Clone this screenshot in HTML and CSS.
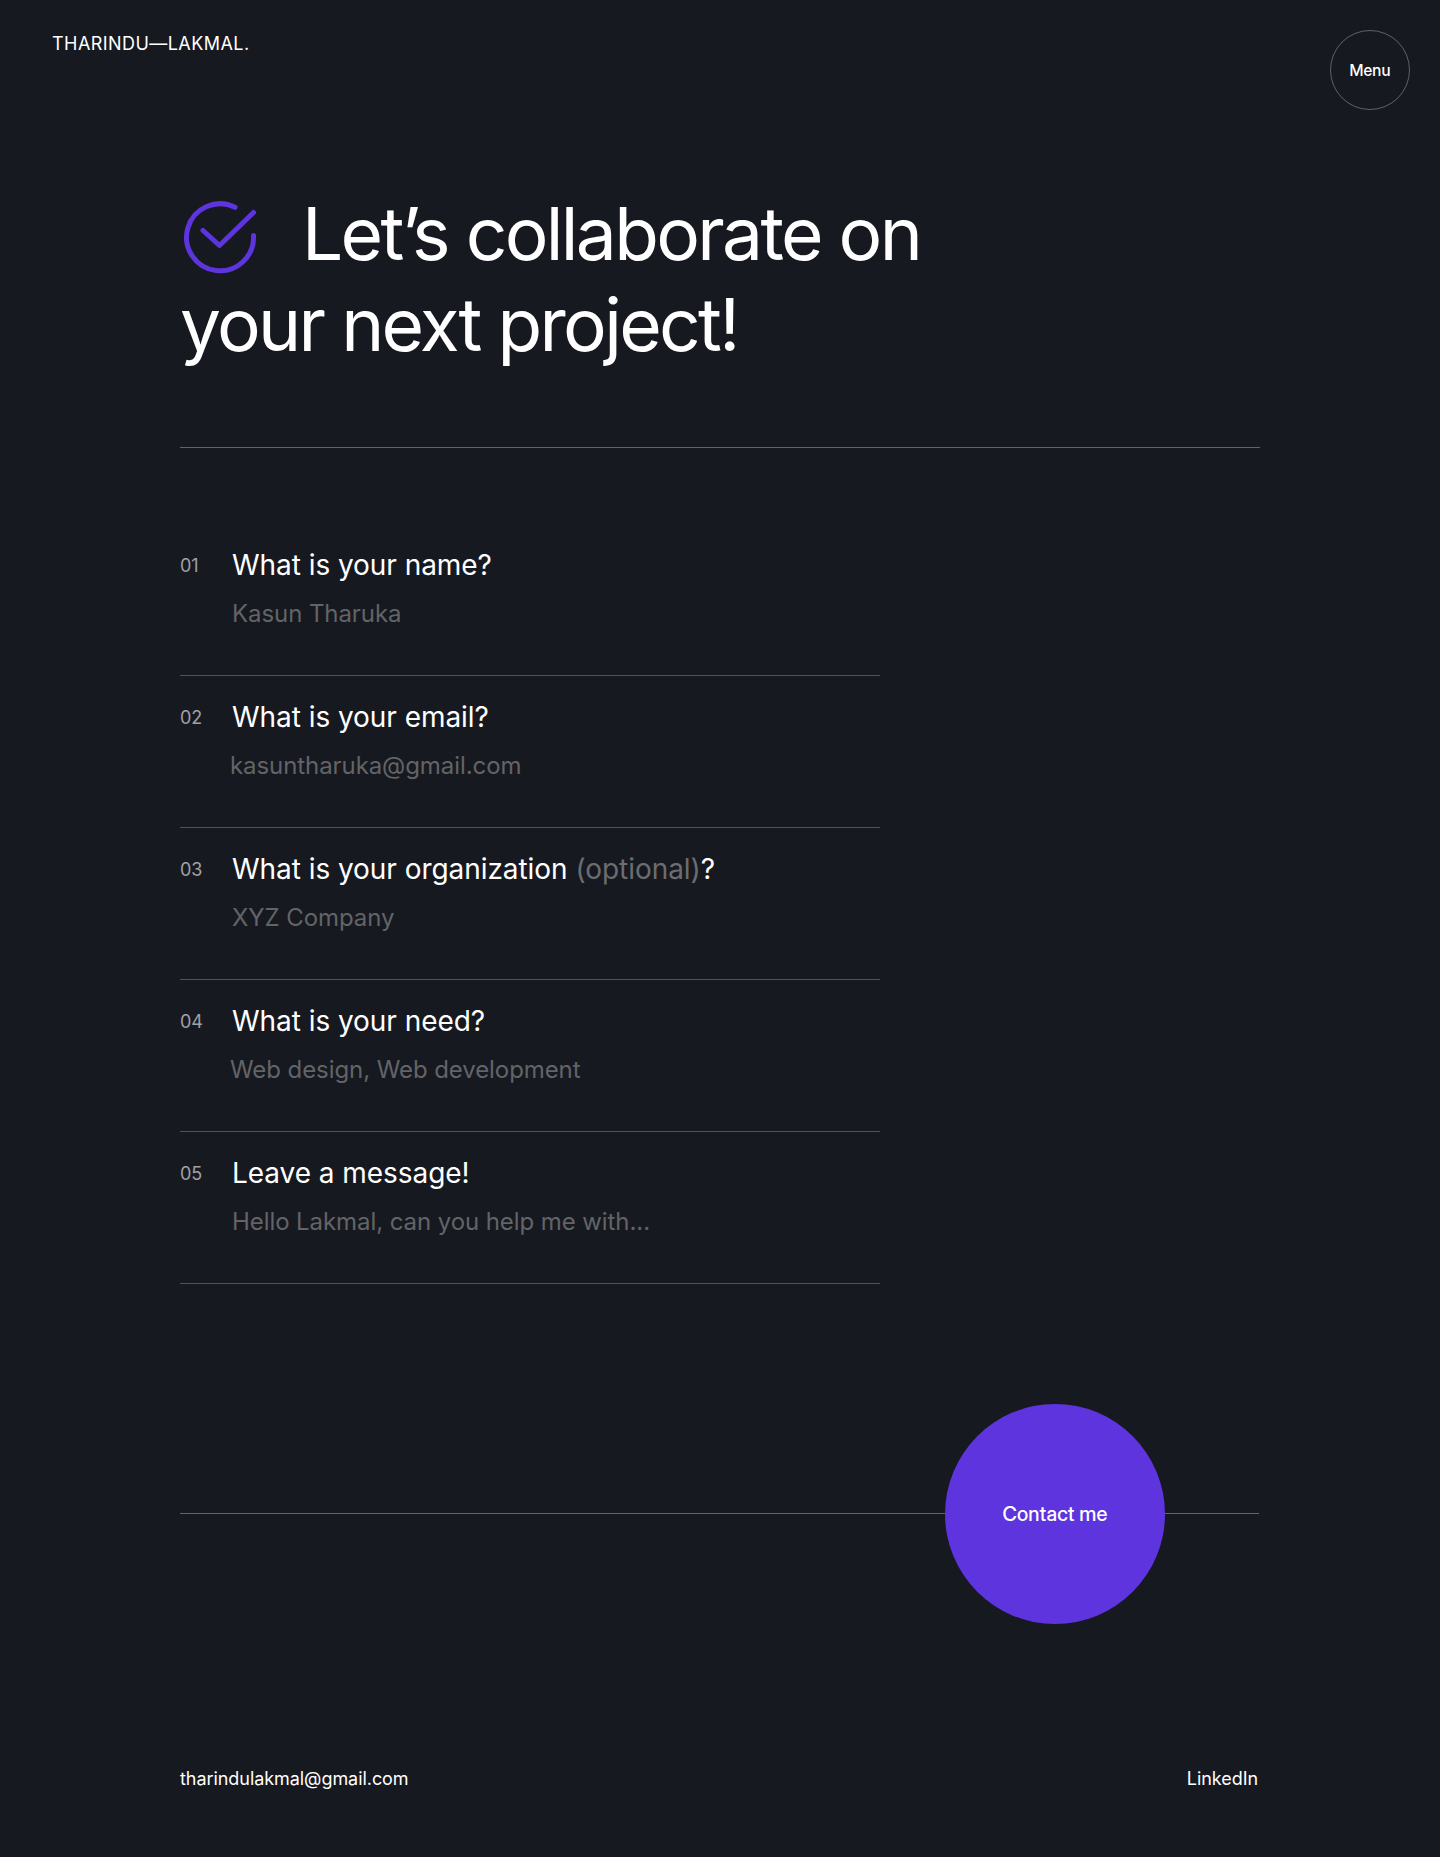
FILE: index.html
```html
<!DOCTYPE html>
<html lang="en">
<head>
<meta charset="utf-8">
<title>Tharindu Lakmal</title>
<link rel="stylesheet" href="styles.css">
</head>
<body>
<header class="top">
  <a class="brand">THARINDU—LAKMAL.</a>
  <button class="menu">Menu</button>
</header>
<main class="page">
  <h1 class="title">
    <span class="line first"><svg class="check" viewBox="0 0 76 76" fill="none" stroke="#5d34dd" stroke-width="5" stroke-linecap="round" stroke-linejoin="round"><path d="M53 7.300A33.500 33.500 0 1 0 71.500 35.500"/><path d="M21 30.500L37.500 45.500L71.500 12.500"/></svg><span>Let<span class="apostrophe">’</span>s collaborate on</span></span>
    <span class="line">your next project!</span>
  </h1>
  <form class="form">
    <div class="field"><span class="num">01</span><div><label class="question">What is your name?</label><p class="answer">Kasun Tharuka</p></div></div>
    <div class="field"><span class="num">02</span><div><label class="question">What is your email?</label><p class="answer outdent">kasuntharuka@gmail.com</p></div></div>
    <div class="field"><span class="num">03</span><div><label class="question">What is your organization <span class="optional">(optional)</span>?</label><p class="answer">XYZ Company</p></div></div>
    <div class="field"><span class="num">04</span><div><label class="question">What is your need?</label><p class="answer outdent">Web design, Web development</p></div></div>
    <div class="field"><span class="num">05</span><div><label class="question">Leave a message!</label><p class="answer">Hello Lakmal, can you help me with...</p></div></div>
  </form>
  <div class="submit"><span class="rule left"></span><button class="contact">Contact me</button><span class="rule right"></span></div>
  <footer class="footer"><a class="mail">tharindulakmal@gmail.com</a><a class="linkedin">LinkedIn</a></footer>
</main>
</body>
</html>
```
FILE: styles.css
```css
* { box-sizing: border-box; }
body { margin: 0; min-height: 1857px; background: #171920; color: #fff; font-family: Inter, sans-serif; }
button { padding: 0; color: #fff; font-family: "Inter Display", Inter, sans-serif; border-radius: 50%; }
.top { display: flex; justify-content: space-between; align-items: flex-start; height: 110px; padding: 30px 30px 0 52px; }
.brand { font-size: 18px; line-height: 28px; letter-spacing: 0.44px; }
.menu { width: 80px; height: 80px; border: 1px solid #5f6164; background: none; font-size: 16px; font-weight: 500; letter-spacing: 0.1px; }
.page { width: 1080px; margin: 0 auto; }
.title { margin: 0; height: 338px; padding-top: 78px; border-bottom: 1px solid #626467; font-size: 73px; font-weight: 400; line-height: 91px; letter-spacing: -2.68px; }
.line { display: block; white-space: nowrap; }
.first { display: flex; }
.check { flex: none; width: 76px; height: 76px; margin: 12px 44px 0 2px; }
.apostrophe { letter-spacing: -8.68px; }
.form { width: 700px; padding-top: 76px; }
.field { display: flex; height: 152px; padding-top: 23px; border-bottom: 1px solid #505254; }
.num { width: 52px; color: #a0a1a4; font-size: 18px; line-height: 38px; }
.question { display: block; font-size: 28px; line-height: 36px; letter-spacing: -0.05px; white-space: nowrap; }
.optional { color: #6b6d70; }
.answer { margin: 14px 0 0; color: #626467; font-size: 24px; line-height: 34px; letter-spacing: -0.08px; }
.outdent { margin-left: -2px; }
.submit { display: flex; align-items: center; margin-top: 120px; padding-right: 1px; }
.rule { height: 1px; margin-bottom: 2px; background: #626467; }
.left { width: 765px; }
.right { flex: 1; }
.contact { width: 220px; height: 220px; border: 0; background: #5d34dd; font-size: 20px; font-weight: 500; letter-spacing: 0.06px; }
.footer { display: flex; justify-content: space-between; padding: 140px 2px 0 0; font-size: 18px; line-height: 30px; letter-spacing: -0.06px; }
```
